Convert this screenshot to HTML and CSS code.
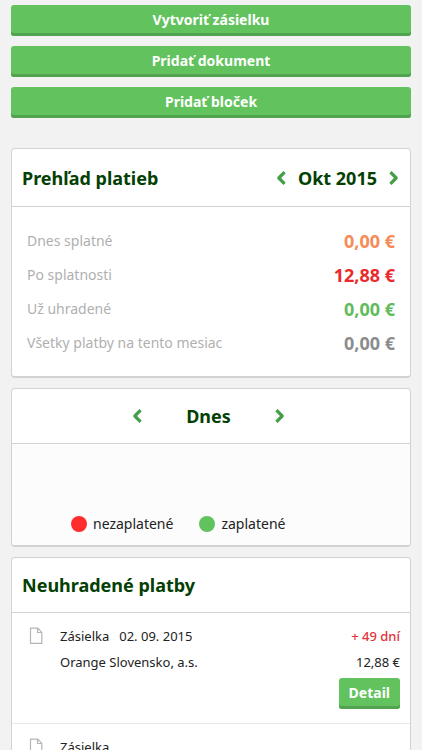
FILE: index.html
```html
<!DOCTYPE html>
<html lang="sk">
<head>
<meta charset="utf-8">
<meta name="viewport" content="width=device-width, initial-scale=1">
<title>Prehľad platieb</title>
<link rel="stylesheet" href="styles.css">
</head>
<body>
<svg class="defs" aria-hidden="true">
  <symbol id="prev" viewBox="0 0 12 16"><path d="M9.6 2.2 3.8 8l5.8 5.8" fill="none" stroke="currentColor" stroke-width="3.2" stroke-linejoin="round"/></symbol>
  <symbol id="next" viewBox="0 0 12 16"><path d="M2.4 2.2 8.2 8l-5.8 5.8" fill="none" stroke="currentColor" stroke-width="3.2" stroke-linejoin="round"/></symbol>
  <symbol id="doc" viewBox="0 0 14 18"><path d="M1.5 1.2h7.3l4 4.2v11H1.5zM8.5 1.2v4.3h4.3" fill="none" stroke="currentColor" stroke-width="1.2" stroke-linejoin="round"/></symbol>
</svg>
<main class="page">
  <div class="actions">
    <button class="btn" type="button">Vytvoriť zásielku</button>
    <button class="btn" type="button">Pridať dokument</button>
    <button class="btn" type="button">Pridať bloček</button>
  </div>

  <section class="card">
    <header class="card-head overview-head">
      <h2>Prehľad platieb</h2>
      <div class="month">
        <button class="arrow" type="button" aria-label="Predchádzajúci mesiac"><svg><use href="#prev"/></svg></button>
        <span class="period">Okt 2015</span>
        <button class="arrow" type="button" aria-label="Nasledujúci mesiac"><svg><use href="#next"/></svg></button>
      </div>
    </header>
    <dl class="totals">
      <div><dt>Dnes splatné</dt><dd class="due">0,00 €</dd></div>
      <div><dt>Po splatnosti</dt><dd class="late">12,88 €</dd></div>
      <div><dt>Už uhradené</dt><dd class="paid">0,00 €</dd></div>
      <div><dt>Všetky platby na tento mesiac</dt><dd class="all">0,00 €</dd></div>
    </dl>
  </section>

  <section class="card">
    <header class="card-head day-head">
      <button class="arrow" type="button" aria-label="Predchádzajúci deň"><svg><use href="#prev"/></svg></button>
      <span class="period">Dnes</span>
      <button class="arrow" type="button" aria-label="Nasledujúci deň"><svg><use href="#next"/></svg></button>
    </header>
    <div class="timeline">
      <ul class="legend">
        <li><span class="dot dot-unpaid"></span>nezaplatené</li>
        <li><span class="dot dot-paid"></span>zaplatené</li>
      </ul>
    </div>
  </section>

  <section class="card">
    <header class="card-head">
      <h2>Neuhradené platby</h2>
    </header>
    <ul class="payments">
      <li class="payment">
        <svg class="doc"><use href="#doc"/></svg>
        <div class="info">
          <p><span>Zásielka</span><span>02. 09. 2015</span></p>
          <p>Orange Slovensko, a.s.</p>
        </div>
        <div class="amount">
          <p class="overdue">+ 49 dní</p>
          <p>12,88 €</p>
          <button class="btn btn-detail" type="button">Detail</button>
        </div>
      </li>
      <li class="payment">
        <svg class="doc"><use href="#doc"/></svg>
        <div class="info">
          <p><span>Zásielka</span></p>
        </div>
      </li>
    </ul>
  </section>
</main>
</body>
</html>
```

FILE: styles.css
```css
* { box-sizing: border-box; }

body, h2, p, ul, dl, dd { margin: 0; padding: 0; }

ul { list-style: none; }

body {
  background: #f2f2f2;
  color: #222;
  font: 13px/26px "Noto Sans", "Open Sans", sans-serif;
}

.defs { display: none; }

.page {
  display: flex;
  flex-direction: column;
  gap: 10px;
  height: 100vh;
  padding: 5px 11px 0;
  overflow: hidden;
}

.actions {
  display: flex;
  flex-direction: column;
  gap: 10px;
  margin-bottom: 20px;
}

.btn {
  height: 31px;
  padding: 0 10px 2px;
  border: 0;
  border-radius: 3px;
  background: #62c25e;
  box-shadow: inset 0 -3px #52a350;
  color: #fff;
  font: 700 14px/28px "Noto Sans", "Open Sans", sans-serif;
}

.card {
  flex: none;
  border: 1px solid #d2d2d2;
  border-bottom-width: 2px;
  border-radius: 4px;
  background: #fff;
  overflow: hidden;
}

.card-head {
  display: flex;
  align-items: center;
  height: 55px;
  padding: 0 10px;
  border-bottom: 1px solid #d2d2d2;
  color: #043f04;
}

h2, .period { font-size: 18px; font-weight: 700; line-height: 26px; }

.overview-head {
  justify-content: space-between;
  height: 58px;
}

.month { display: flex; align-items: center; gap: 11px; }

.arrow {
  display: flex;
  padding: 0;
  border: 0;
  background: none;
  color: #43a047;
}

.arrow svg { width: 12px; height: 16px; }

.totals { padding: 17px 15px 16px; }

.totals div {
  display: flex;
  align-items: center;
  justify-content: space-between;
  height: 34px;
}

.totals dt { color: #b0b0b0; font-size: 14px; }

.totals dd { font-size: 18px; font-weight: 700; }

.due { color: #f58b57; }
.late { color: #ea2a2c; }
.paid { color: #62bb5c; }
.all { color: #8c8c8c; }

.day-head {
  justify-content: center;
  gap: 43px;
  padding-right: 15px;
}

.timeline {
  display: flex;
  align-items: flex-end;
  height: 101px;
  padding: 0 59px 8px;
  background: #fcfcfc;
}

.legend { display: flex; gap: 26px; font-size: 14px; }

.legend li { display: flex; align-items: center; gap: 6px; }

.dot { width: 16px; height: 16px; border-radius: 50%; }
.dot-unpaid { background: #ff2c2c; }
.dot-paid { background: #62c25e; }

.payment {
  display: flex;
  min-height: 111px;
  padding: 10px 10px 13px 17px;
  border-bottom: 1px solid #e8e8e8;
}

.doc {
  width: 14px;
  height: 18px;
  margin: 4px 17px 0 0;
  color: #b5b5b5;
}

.info { flex: 1; }

.info span + span { margin-left: 10px; }

.amount { text-align: right; }

.overdue { color: #e23338; font-weight: 500; }

.btn-detail { display: block; margin: 3px 0 0 auto; }
```
